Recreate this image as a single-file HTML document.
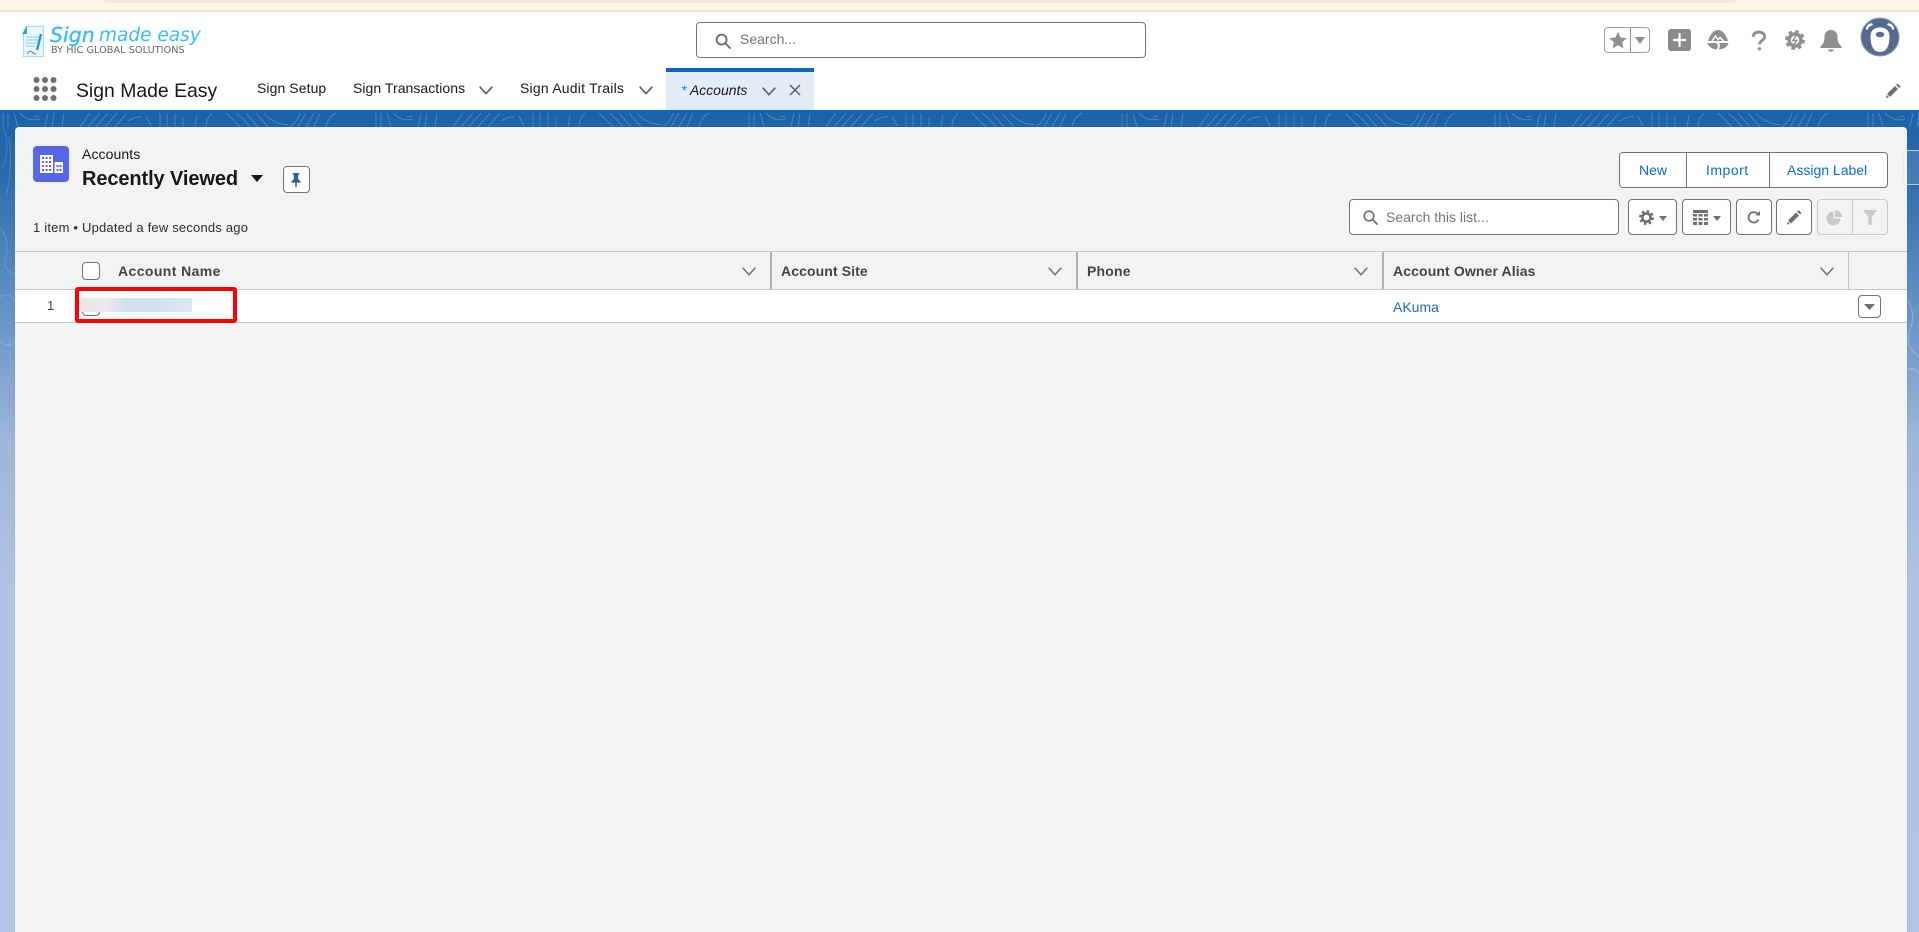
<!DOCTYPE html>
<html lang="en"><head><meta charset="utf-8"><title>Accounts</title>
<style>
html,body{margin:0;padding:0;width:1919px;height:932px;overflow:hidden;background:#fff;font-family:"Liberation Sans",sans-serif;color:#181818}
.a{position:absolute}
.t{position:absolute;white-space:nowrap;line-height:20px;height:20px;font-size:14px}
.b{position:absolute;box-sizing:border-box;background:#fff;border:1px solid #747474;border-radius:4px}
svg{position:absolute;display:block;overflow:visible}
.th{font-weight:700;color:#444;font-size:14px}
</style></head><body>
<div class="a" style="left:0;top:0;width:1919px;height:932px;overflow:hidden">
<!-- browser strip -->
<div class="a" style="left:0;top:0;width:1919px;height:10px;background:#fdf6ea"></div>
<div class="a" style="left:104px;top:0;width:1632px;height:3px;background:#f1e9e2;border-radius:0 0 6px 6px"></div>
<div class="a" style="left:0;top:10px;width:1919px;height:2px;background:#f2e7d6"></div>

<!-- background -->
<div class="a" style="left:0;top:113px;width:1919px;height:819px;background:linear-gradient(180deg,#1b62a6 0,#2a6cae 60px,#5f8dc2 180px,#9db7da 330px,#afc4e1 480px,#b0c5e2 932px)"></div>
<svg style="left:0;top:113px" width="1919" height="14">
<defs><pattern id="p" x="0" y="0" width="373" height="14" patternUnits="userSpaceOnUse">
<path fill="none" stroke="#fff" stroke-opacity=".22" stroke-width="1" d="M3 0V14M8 0V14M14 0q2 7 4 14M20 0q8 9 20 6M34 4l5-1M48 0l-3 14M54 0l-2 14M64 0l-2 14M90 0L80 14M100 0L88 14M108 0L96 14M117 0L105 14M127 0L115 14M128 8q8-5 14-4M146 3l5 10M160 0V14M167 0V14M175 0V14M183 4V14M197 2L195 14M212 0q-6 6-6 14M226 0l14 14M236 0q8 6 14 14M246 0l12 14M256 0l12 14M264 0q8 10 24 12M300 0q-2 8-10 14M306 0l-8 14M314 0l-8 14M320 0l-6 14M336 0q-8 4-10 14"/>
</pattern></defs>
<rect width="1919" height="14" fill="url(#p)"/>
</svg>
<svg style="left:0;top:127px" width="15" height="300" fill="none" stroke="#fff" stroke-opacity=".16"><path d="M3 0q8 20 0 40M9 10q4 30-3 60M0 100q10 14 6 28t8 20M0 170q10-6 14 4M0 215q10 6 15 0"/></svg>
<svg style="left:1906px;top:300px" width="13" height="200" fill="none" stroke="#fff" stroke-opacity=".25"><path d="M2 0q8 14 2 30t8 26M0 70q8-4 13 4"/></svg>

<!-- header -->
<div class="a" style="left:0;top:12px;width:1919px;height:98px;background:#fff"></div>
<div class="a" style="left:0;top:110px;width:1919px;height:3px;background:#0a66c2"></div>

<!-- logo -->
<svg style="left:21px;top:25px" width="24" height="33" viewBox="0 0 24 33">
<path d="M5 1.5H22.5V31.5H2.5V8Z" fill="#eaf7fe" stroke="#a9dcf6" stroke-width="1.2"/>
<path d="M6 1L1 9H6Z" fill="#27a3d8"/>
<path d="M5 12H18M5 15H18M5 18H16M5 21H14" stroke="#9fd3f2" stroke-width="1.3"/>
<path d="M20 9L16 25" stroke="#2f8fd6" stroke-width="2.4"/>
<path d="M6 29q3-4 5-2t4 2" stroke="#777" fill="none" stroke-width="1"/>
</svg>
<div class="t" style="left:50px;top:24px;height:22px;line-height:22px;font-family:'DejaVu Sans',sans-serif;font-size:20.500px;font-style:italic;color:#3cbcf6;-webkit-text-stroke:.4px #3cbcf6">Sign</div>
<div class="t" style="left:99px;top:25px;height:22px;line-height:22px;font-family:'DejaVu Sans',sans-serif;font-size:18.500px;font-style:italic;color:#3cbcf6">made easy</div>
<div class="t" style="left:51px;top:41px;font-family:'DejaVu Sans',sans-serif;font-size:9.700px;color:#666;letter-spacing:.05px">BY HIC GLOBAL SOLUTIONS</div>

<!-- global search -->
<div class="b" style="left:696px;top:22px;width:450px;height:36px"></div>
<svg style="left:715px;top:33px" width="16" height="16" viewBox="0 0 16 16" fill="none" stroke="#6b6b6b" stroke-width="1.8"><circle cx="6.6" cy="6.6" r="5"/><path d="M10.3 10.3L15 15" stroke-linecap="round"/></svg>
<div class="t" style="left:740px;top:29px;color:#747474">Search...</div>

<!-- top right icons -->
<div class="b" style="left:1604px;top:27px;width:46px;height:26px;border-color:#a0a0a0"></div>
<div class="a" style="left:1630px;top:27px;width:1px;height:26px;background:#8f8f8f"></div>
<svg style="left:1609px;top:31px" width="18" height="18" viewBox="0 0 24 24" fill="#8f8f8f"><path d="M12 1l3.4 7.6 8.2.9-6.1 5.5 1.7 8.1L12 19l-7.2 4.1 1.7-8.1L.4 9.5l8.2-.9z"/></svg>
<svg style="left:1634px;top:37px" width="12" height="7" viewBox="0 0 12 7" fill="#8f8f8f"><path d="M1 0H11L6 7Z"/></svg>
<div class="a" style="left:1668px;top:29px;width:23px;height:22px;background:#8c8c8c;border-radius:3px"></div>
<svg style="left:1672px;top:32px" width="15" height="16" viewBox="0 0 15 16" stroke="#fff" stroke-width="2.2"><path d="M7.5 1V15M1 8H14"/></svg>
<svg style="left:1707px;top:30px" width="22" height="20" viewBox="0 0 22 20"><path d="M11 0C7 0 3 4 1 11H21C19 4 15 0 11 0Z" fill="#8f8f8f"/><path d="M.5 13H9l2 2-1 4.500C5 19 1.500 17 .5 13ZM21.500 13H12l1 2-1 4.500c5-.5 8.500-2.500 9.500-6.500Z" fill="#8f8f8f"/><path d="M5 11l3.500-5 2.500 3.500 2-2 3.500 3.500" fill="none" stroke="#fff" stroke-width="1.500"/></svg>
<svg style="left:1751px;top:30px" width="16" height="22" viewBox="0 0 17 22" fill="none"><path d="M2.200 6.500C2.500 3.300 5 1.500 8.300 1.500c3.500 0 6.200 2 6.200 5 0 4-5.500 4-5.500 8.200" stroke="#8f8f8f" stroke-width="3"/><circle cx="9" cy="19.300" r="1.800" fill="#8f8f8f"/></svg>
<svg style="left:1785px;top:30px" width="20" height="20" viewBox="0 0 20 20" fill="none"><circle cx="10" cy="10" r="8.500" stroke="#8f8f8f" stroke-width="3" stroke-dasharray="3.500 3.170"/><circle cx="10" cy="10" r="6" stroke="#8f8f8f" stroke-width="3.400"/><path d="M11 6L8 10.500H12L9 14.500" stroke="#8f8f8f" stroke-width="1.400"/></svg>
<svg style="left:1820px;top:30px" width="22" height="22" viewBox="0 0 22 22" fill="#8f8f8f"><path d="M11 0c4 0 6.500 3 6.500 7 0 5 1 6.500 4 9.500v1.500H.5v-1.500c3-3 4-4.500 4-9.500 0-4 2.500-7 6.500-7Z"/><path d="M8 19.500h6c-.5 1.500-1.500 2.300-3 2.300s-2.500-.8-3-2.300Z"/></svg>
<svg style="left:1860px;top:17px" width="40" height="40" viewBox="0 0 40 40"><circle cx="20" cy="20" r="19" fill="#56698f" stroke="#8b98b2"/><path d="M7 11.500q1-3.500 4.500-4" fill="none" stroke="#fff" stroke-width="2.400" stroke-linecap="round"/><path d="M33 11.500q-1-3.500-4.500-4" fill="none" stroke="#fff" stroke-width="2.400" stroke-linecap="round"/><path d="M20 10.500C13.500 10.500 10.500 14 10.500 19.500C10.500 27 12.500 35 20 35C27.500 35 29.500 27 29.500 19.500C29.500 14 26.500 10.500 20 10.500Z" fill="#fff"/><ellipse cx="20" cy="17.500" rx="4.200" ry="2.800" fill="#56698f"/></svg>

<!-- nav -->
<svg style="left:33px;top:77px" width="24" height="24" fill="#6f6f6f"><circle cx="3.500" cy="3" r="3"/><circle cx="12" cy="3" r="3"/><circle cx="20.500" cy="3" r="3"/><circle cx="3.500" cy="12" r="3"/><circle cx="12" cy="12" r="3"/><circle cx="20.500" cy="12" r="3"/><circle cx="3.500" cy="21" r="3"/><circle cx="12" cy="21" r="3"/><circle cx="20.500" cy="21" r="3"/></svg>
<div class="t" style="left:76px;top:79px;font-size:19.400px;height:24px;line-height:24px">Sign Made Easy</div>
<div class="t" style="left:257px;top:78px;letter-spacing:.08px">Sign Setup</div>
<div class="t" style="left:353px;top:78px;letter-spacing:.05px">Sign Transactions</div>
<svg style="left:479px;top:86px" width="14" height="9" viewBox="0 0 14 9" fill="none" stroke="#5f5f5f" stroke-width="1.600"><path d="M.7 .7L7 7.700L13.300 .7"/></svg>
<div class="t" style="left:520px;top:78px;letter-spacing:.22px">Sign Audit Trails</div>
<svg style="left:639px;top:86px" width="14" height="9" viewBox="0 0 14 9" fill="none" stroke="#5f5f5f" stroke-width="1.600"><path d="M.7 .7L7 7.700L13.300 .7"/></svg>
<div class="a" style="left:666px;top:68px;width:148px;height:42px;background:#e4edf7"></div>
<div class="a" style="left:666px;top:68px;width:148px;height:4px;background:#0a66c2"></div>
<div class="t" style="left:681px;top:80px;font-style:italic"><span style="color:#2b78c8">*</span> Accounts</div>
<svg style="left:762px;top:87px" width="14" height="9" viewBox="0 0 14 9" fill="none" stroke="#5f5f5f" stroke-width="1.600"><path d="M.7 .7L7 7.700L13.300 .7"/></svg>
<svg style="left:789px;top:84px" width="12" height="12" viewBox="0 0 12 12" fill="none" stroke="#5f5f5f" stroke-width="1.500"><path d="M1 1L11 11M11 1L1 11"/></svg>
<svg style="left:1886px;top:83px" width="15" height="15" viewBox="0 0 15 15" fill="#6f6f6f"><path d="M11.500 .5L14.500 3.500L13 5L10 2ZM9 3L12 6L4 14L1 11ZM.5 12L3 14.500L0 15Z"/></svg>

<!-- card -->
<div class="a" style="left:15px;top:127px;width:1892px;height:805px;background:#f3f3f3;border-radius:4px 4px 0 0;box-shadow:0 0 1px rgba(0,0,0,.2)"></div>
<div class="a" style="left:1903px;top:150px;width:16px;height:35px;box-sizing:border-box;background:rgba(255,255,255,.12);border:1px solid rgba(225,232,240,.7);border-right:0;border-radius:4px 0 0 4px"></div>

<!-- list header -->
<div class="a" style="left:33px;top:146px;width:36px;height:36px;background:#5867e8;border-radius:4px"></div>
<svg style="left:40px;top:155px" width="23" height="18" viewBox="0 0 23 18" fill="#fff"><path d="M0 0H13V18H0ZM14.500 7H23V18H14.500Z"/><g fill="#5867e8"><rect x="2" y="2" width="2" height="2"/><rect x="5.500" y="2" width="2" height="2"/><rect x="9" y="2" width="2" height="2"/><rect x="2" y="6" width="2" height="2"/><rect x="5.500" y="6" width="2" height="2"/><rect x="9" y="6" width="2" height="2"/><rect x="2" y="10" width="2" height="2"/><rect x="5.500" y="10" width="2" height="2"/><rect x="9" y="10" width="2" height="2"/><rect x="2" y="14" width="2" height="2"/><rect x="5.500" y="14" width="2" height="2"/><rect x="9" y="14" width="2" height="2"/><rect x="16.500" y="10" width="2" height="2"/><rect x="19.500" y="10" width="2" height="2"/><rect x="16.500" y="14" width="2" height="2"/><rect x="19.500" y="14" width="2" height="2"/></g></svg>
<div class="t" style="left:82px;top:144px;letter-spacing:.1px">Accounts</div>
<div class="t" style="left:82px;top:167px;font-size:20px;height:24px;line-height:24px;font-weight:700;letter-spacing:-.1px">Recently Viewed</div>
<svg style="left:251px;top:175px" width="12" height="7" viewBox="0 0 12 7" fill="#181818"><path d="M0 0H12L6 7Z"/></svg>
<div class="b" style="left:283px;top:166px;width:27px;height:27px"></div>
<svg style="left:291px;top:173px" width="10" height="14" viewBox="0 0 11 16" fill="#2b5d96"><path d="M2 0H9V1.500L8 2.500V7L11 10V11H6.300V16H4.700V11H0V10L3 7V2.500L2 1.500Z"/></svg>
<div class="t" style="left:33px;top:218px;font-size:13px;color:#2e2e2e;letter-spacing:.2px">1 item • Updated a few seconds ago</div>

<!-- action buttons -->
<div class="b" style="left:1619px;top:152px;width:269px;height:36px"></div>
<div class="a" style="left:1686px;top:152px;width:1px;height:36px;background:#747474"></div>
<div class="a" style="left:1769px;top:152px;width:1px;height:36px;background:#747474"></div>
<div class="t" style="left:1639px;top:160px;color:#0a6bd0">New</div>
<div class="t" style="left:1706px;top:160px;color:#0a6bd0;letter-spacing:.5px">Import</div>
<div class="t" style="left:1787px;top:160px;color:#0a6bd0">Assign Label</div>

<!-- list controls -->
<div class="b" style="left:1349px;top:199px;width:270px;height:36px"></div>
<svg style="left:1363px;top:210px" width="15" height="15" viewBox="0 0 15 15" fill="none" stroke="#6b6b6b" stroke-width="1.600"><circle cx="6" cy="6" r="4.800"/><path d="M9.500 9.500L14 14" stroke-linecap="round"/></svg>
<div class="t" style="left:1386px;top:207px;color:#747474">Search this list...</div>

<div class="b" style="left:1628px;top:199px;width:49px;height:36px"></div>
<svg style="left:1639px;top:210px" width="15" height="15" viewBox="0 0 20 20" fill="none"><circle cx="10" cy="10" r="8.500" stroke="#6f6f6f" stroke-width="3" stroke-dasharray="3.500 3.170"/><circle cx="10" cy="10" r="5.500" stroke="#6f6f6f" stroke-width="3.400"/></svg>
<svg style="left:1659px;top:216px" width="8" height="5" viewBox="0 0 8 5" fill="#6f6f6f"><path d="M0 0H8L4 5Z"/></svg>
<div class="b" style="left:1682px;top:199px;width:49px;height:36px"></div>
<svg style="left:1693px;top:210px" width="15" height="15" viewBox="0 0 15 15" fill="#6f6f6f"><path d="M0 0H15V3H0ZM0 4H4V6.500H0ZM5.500 4H9.500V6.500H5.500ZM11 4H15V6.500H11ZM0 8H4V10.500H0ZM5.500 8H9.500V10.500H5.500ZM11 8H15V10.500H11ZM0 12H4V15H0ZM5.500 12H9.500V15H5.500ZM11 12H15V15H11Z"/></svg>
<svg style="left:1713px;top:216px" width="8" height="5" viewBox="0 0 8 5" fill="#6f6f6f"><path d="M0 0H8L4 5Z"/></svg>
<div class="b" style="left:1736px;top:199px;width:36px;height:36px"></div>
<svg style="left:1747px;top:210px" width="14" height="15" viewBox="0 0 14 15" fill="none" stroke="#6f6f6f" stroke-width="1.800"><path d="M11.500 9.500A5.200 5.200 0 1 1 10.800 4"/><path d="M13 1V5.500H8.500" fill="#6f6f6f" stroke="none"/></svg>
<div class="b" style="left:1776px;top:199px;width:36px;height:36px"></div>
<svg style="left:1787px;top:209px" width="15" height="16" viewBox="0 0 15 15" fill="#6f6f6f"><path d="M11.500 .5L14.500 3.500L13 5L10 2ZM9 3L12 6L4 14L1 11ZM.5 12L3 14.500L0 15Z"/></svg>
<div class="b" style="left:1817px;top:199px;width:71px;height:36px;background:#f3f3f3;border-color:#c9c9c9"></div>
<div class="a" style="left:1852px;top:199px;width:1px;height:36px;background:#c9c9c9"></div>
<svg style="left:1827px;top:210px" width="15" height="15" viewBox="0 0 15 15" fill="#c9c9c9"><path d="M6.500 1.500V8.500H13.500A7 7 0 1 1 6.500 1.500ZM8 0A7 7 0 0 1 15 7H8Z"/></svg>
<svg style="left:1863px;top:210px" width="14" height="15" viewBox="0 0 14 15" fill="#c9c9c9"><path d="M0 0H14L8.700 7V15H5.300V7Z"/></svg>

<!-- table -->
<div class="a" style="left:15px;top:251px;width:1892px;height:1px;background:#c9c9c9"></div>
<div class="a" style="left:15px;top:289px;width:1892px;height:33px;background:#fff"></div>
<div class="a" style="left:15px;top:289px;width:1892px;height:1px;background:#c4c4c4"></div>
<div class="a" style="left:15px;top:322px;width:1892px;height:1px;background:#c9c9c9"></div>
<div class="a" style="left:770px;top:252px;width:2px;height:37px;background:#b0b0b0"></div>
<div class="a" style="left:1076px;top:252px;width:2px;height:37px;background:#b0b0b0"></div>
<div class="a" style="left:1382px;top:252px;width:2px;height:37px;background:#b0b0b0"></div>
<div class="a" style="left:1848px;top:252px;width:1px;height:37px;background:#c4c4c4"></div>
<div class="b" style="left:82px;top:262px;width:18px;height:18px"></div>
<div class="t th" style="left:118px;top:261px;letter-spacing:.4px">Account Name</div>
<div class="t th" style="left:781px;top:261px;letter-spacing:.1px">Account Site</div>
<div class="t th" style="left:1087px;top:261px;letter-spacing:.2px">Phone</div>
<div class="t th" style="left:1393px;top:261px;letter-spacing:.12px">Account Owner Alias</div>
<svg style="left:742px;top:267px" width="14" height="9" viewBox="0 0 14 9" fill="none" stroke="#6f6f6f" stroke-width="1.500"><path d="M.7 .7L7 7.700L13.300 .7"/></svg>
<svg style="left:1048px;top:267px" width="14" height="9" viewBox="0 0 14 9" fill="none" stroke="#6f6f6f" stroke-width="1.500"><path d="M.7 .7L7 7.700L13.300 .7"/></svg>
<svg style="left:1354px;top:267px" width="14" height="9" viewBox="0 0 14 9" fill="none" stroke="#6f6f6f" stroke-width="1.500"><path d="M.7 .7L7 7.700L13.300 .7"/></svg>
<svg style="left:1820px;top:267px" width="14" height="9" viewBox="0 0 14 9" fill="none" stroke="#6f6f6f" stroke-width="1.500"><path d="M.7 .7L7 7.700L13.300 .7"/></svg>

<div class="t" style="left:47px;top:296px;font-size:13px;color:#444">1</div>
<div class="b" style="left:82px;top:298px;width:18px;height:18px"></div>
<div class="a" style="left:78px;top:298px;width:114px;height:14px;background:linear-gradient(90deg,#ece6e6 0,#ecebee 25%,#d2e0ee 42%,#d0dfed 65%,#dfe8f2 100%)"></div>
<div class="a" style="left:75px;top:287px;width:162px;height:36px;box-sizing:border-box;border:4px solid #ff0000;border-radius:3px"></div>
<div class="t" style="left:1393px;top:297px;color:#1b67b8">AKuma</div>
<div class="b" style="left:1858px;top:295px;width:23px;height:23px"></div>
<svg style="left:1864px;top:304px" width="11" height="6" viewBox="0 0 11 6" fill="#6f6f6f"><path d="M0 0H11L5.500 6Z"/></svg>
</div>
</body></html>
